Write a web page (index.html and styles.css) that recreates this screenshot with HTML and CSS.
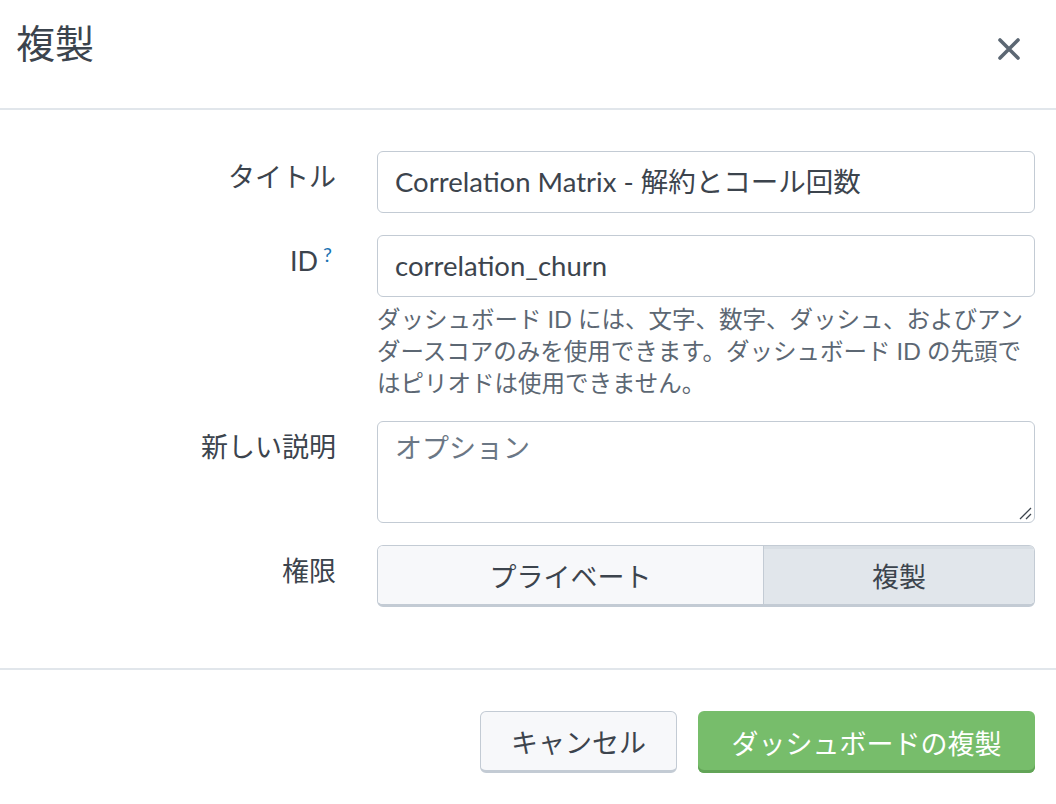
FILE: index.html
```html
<!DOCTYPE html>
<html lang="ja">
<head>
<meta charset="utf-8">
<title>複製</title>
<link rel="stylesheet" href="styles.css">
</head>
<body>
<div class="dialog">
  <header class="dlg-header">
    <h1 class="dlg-title">複製</h1>
    <button class="close" aria-label="閉じる">
      <svg width="24" height="24" viewBox="0 0 24 24"><path d="M3 3 L21 21 M21 3 L3 21" stroke="#5c6773" stroke-width="3.6" stroke-linecap="round" fill="none"/></svg>
    </button>
  </header>
  <main class="dlg-body">
    <div class="form">
      <label class="lbl">タイトル</label>
      <div class="ctl"><div class="input">Correlation Matrix - 解約とコール回数</div></div>

      <label class="lbl">ID<sup class="help-q">?</sup></label>
      <div class="ctl">
        <div class="input">correlation_churn</div>
        <p class="help">ダッシュボード ID には、文字、数字、ダッシュ、およびアンダースコアのみを使用できます。ダッシュボード ID の先頭ではピリオドは使用できません。</p>
      </div>

      <label class="lbl">新しい説明</label>
      <div class="ctl">
        <div class="textarea"><span class="ph">オプション</span>
          <svg class="grip" width="14" height="14" viewBox="0 0 14 14"><path d="M2 13 L13 2 M8 13 L13 8" stroke="#3c444d" stroke-width="1.3" fill="none"/></svg>
        </div>
      </div>

      <label class="lbl">権限</label>
      <div class="ctl">
        <div class="seg">
          <button class="seg-btn">プライベート</button>
          <button class="seg-btn active">複製</button>
        </div>
      </div>
    </div>
  </main>
  <footer class="dlg-footer">
    <button class="btn btn-default">キャンセル</button>
    <button class="btn btn-primary">ダッシュボードの複製</button>
  </footer>
</div>
</body>
</html>
```

FILE: styles.css
```css
* { box-sizing: border-box; }
html, body { margin: 0; padding: 0; background: #fff; }
body {
  font-family: Lato, "Noto Sans CJK JP", sans-serif;
  color: #3c444d;
  width: 1056px;
  height: 804px;
  overflow: hidden;
}
.dialog { display: flex; flex-direction: column; height: 804px; }

.dlg-header {
  height: 110px;
  border-bottom: 2px solid #e1e6eb;
  display: flex;
  align-items: flex-start;
  justify-content: space-between;
  padding: 0 0 0 16px;
}
.dlg-title {
  margin: 0;
  font-weight: 400;
  font-size: 39px;
  line-height: 50px;
  padding-top: 18px;
  color: #3c444d;
}
.close {
  border: 0;
  background: none;
  padding: 0;
  margin: 37px 35px 0 0;
  width: 24px;
  height: 24px;
  display: flex;
}

.dlg-body { padding: 41px 21px 0 0; height: 558px; }
.form {
  display: grid;
  grid-template-columns: 336px 1fr;
  column-gap: 41px;
  row-gap: 22px;
}
.lbl {
  text-align: right;
  font-size: 27px;
  line-height: 40px;
  padding-top: 6px;
  color: #3c444d;
}
.help-q {
  color: #1a73b3;
  font-size: 20px;
  line-height: 20px;
  vertical-align: top;
  position: relative;
  top: 3px;
  margin-left: 5px;
  margin-right: 4px;
  font-family: Lato, sans-serif;
}
.ctl { min-width: 0; }
.input {
  height: 62px;
  border: 1px solid #c3cbd4;
  border-radius: 6px;
  padding: 0 17px;
  font-size: 27.5px;
  line-height: 60px;
  color: #3c444d;
  white-space: nowrap;
  overflow: hidden;
}
.help {
  margin: 6px 0 0;
  font-size: 23.5px;
  line-height: 32px;
  color: #5c6773;
}
.textarea {
  position: relative;
  height: 102px;
  border: 1px solid #c3cbd4;
  border-radius: 6px;
  padding: 11px 17px;
  font-size: 27px;
  line-height: 30px;
}
.ph { color: #6b7785; }
.grip { position: absolute; right: 2px; bottom: 2px; }

.seg {
  display: flex;
  height: 62px;
  border: 1px solid #c3cbd4;
  border-bottom-width: 3px;
  border-radius: 6px;
  overflow: hidden;
}
.seg-btn {
  flex: 1 1 0;
  border: 0;
  margin: 0;
  font-family: inherit;
  font-size: 27px;
  color: #3c444d;
  background: #f7f8fa;
  padding: 0;
}
.seg-btn.active {
  flex: 0 0 271px;
  background: #e1e6eb;
  border-left: 1px solid #c3cbd4;
  box-shadow: inset 0 3px 0 #d8dee4;
}

.dlg-footer {
  border-top: 2px solid #e1e6eb;
  display: flex;
  justify-content: flex-end;
  align-items: flex-start;
  gap: 21px;
  padding: 41px 21px 0 0;
  flex: 1;
}
.btn {
  height: 62px;
  border-radius: 6px;
  font-family: inherit;
  font-size: 27px;
  padding: 0;
}
.btn-default {
  width: 197px;
  background: #f7f8fa;
  border: 1px solid #c3cbd4;
  border-bottom-width: 3px;
  color: #3c444d;
}
.btn-primary {
  width: 337px;
  background: #77bd6b;
  border: 0;
  box-shadow: inset 0 -3px 0 #62a457;
  color: #fff;
}
```
